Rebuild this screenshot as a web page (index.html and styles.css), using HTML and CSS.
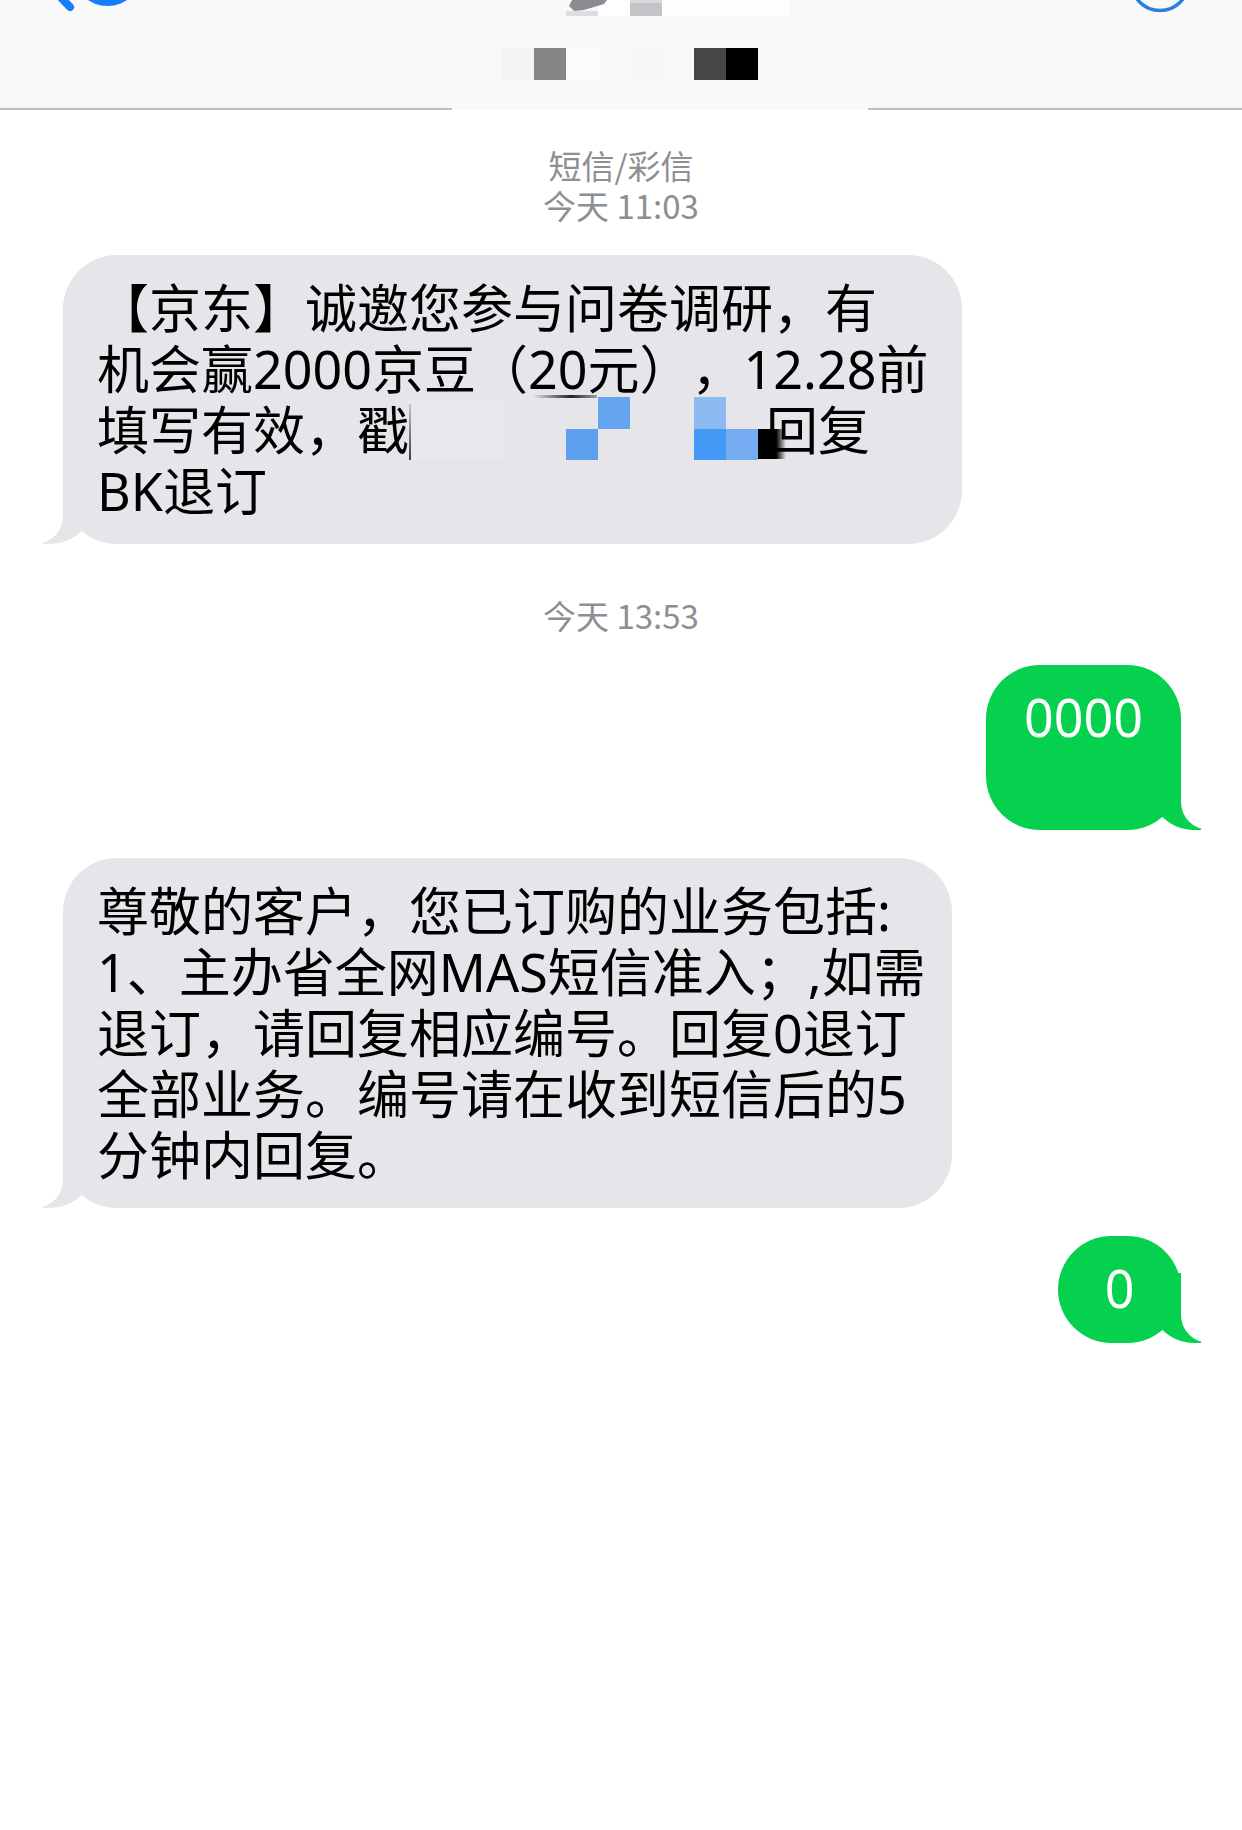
FILE: index.html
```html
<!DOCTYPE html>
<html lang="zh-CN">
<head>
<meta charset="utf-8">
<title>信息</title>
<link rel="stylesheet" href="styles.css">
</head>
<body>
<header class="nav">
  <svg class="nav-art" width="1242" height="108" viewBox="0 0 1242 108" aria-hidden="true">
    <path d="M44 -20 L70 7" stroke="#147efb" stroke-width="8" stroke-linecap="round" fill="none"/>
    <ellipse cx="107.5" cy="-28" rx="34.5" ry="34" fill="#147efb"/>
    <circle cx="1160" cy="-18" r="28.5" fill="none" stroke="#2a7fdb" stroke-width="3.5"/>
    <rect x="662" y="0" width="128" height="16" fill="#fdfdfd"/>
    <rect x="598" y="0" width="32" height="16" fill="#ffffff"/>
    <rect x="566" y="11" width="32" height="5" fill="#dedee1"/>
    <polygon points="572,0 607,0 604,4 584,10 574,11 569,6" fill="#8b8c93"/>
    <rect x="630" y="0" width="32" height="16" fill="#c5c5c9"/>
    <rect x="630" y="0" width="32" height="3" fill="#d9d9dc"/>
    <rect x="502" y="48" width="32" height="32" fill="#f3f3f3"/>
    <rect x="534" y="48" width="32" height="32" fill="#858585"/>
    <rect x="566" y="48" width="34" height="32" fill="#fcfcfc"/>
    <rect x="632" y="48" width="31" height="32" fill="#f6f6f6"/>
    <rect x="694" y="48" width="32" height="32" fill="#464646"/>
    <rect x="726" y="48" width="32" height="32" fill="#000000"/>
  </svg>
</header>
<div class="nav-rule"></div>

<main class="thread">
  <div class="stamp">
    <div>短信/彩信</div>
    <div>今天 11:03</div>
  </div>

  <div class="row in">
    <div class="bubble gray w-first">【京东】诚邀您参与问卷调研，有<br>机会赢2000京豆（20元），12.28前<br>填写有效，戳<span class="redact"><span class="px haze"></span><span class="px edge"></span><span class="px smear"></span><span class="px a"></span><span class="px b"></span><span class="px c"></span><span class="px d"></span><span class="px e"></span><span class="px f"></span></span>回复<br>BK退订</div>
  </div>

  <div class="stamp stamp-gap">
    <div>今天 13:53</div>
  </div>

  <div class="row out">
    <div class="bubble green tall">0000</div>
  </div>

  <div class="row in">
    <div class="bubble gray w-second">尊敬的客户，您已订购的业务包括:<br>1、主办省全网MAS短信准入；,如需<br>退订，请回复相应编号。回复0退订<br>全部业务。编号请在收到短信后的5<br>分钟内回复。</div>
  </div>

  <div class="row out">
    <div class="bubble green">0</div>
  </div>
</main>
</body>
</html>
```

FILE: styles.css
```css
html, body {
  margin: 0;
  padding: 0;
  background: #ffffff;
}

body {
  width: 1242px;
  min-height: 1830px;
  font-family: "Noto Sans", "Noto Sans CJK SC", sans-serif;
  color: #000;
  overflow: hidden;
  text-spacing-trim: space-all;
}

.nav {
  height: 108px;
  background: #f9f9f9;
  position: relative;
  overflow: hidden;
}

.nav-art {
  display: block;
}

.nav-rule {
  height: 2px;
  background: linear-gradient(to right, #bdbdbd 0 452px, #f9f9f9 452px 868px, #bdbdbd 868px);
}

.thread {
  display: flex;
  flex-direction: column;
  padding-top: 35px;
}

.stamp {
  text-align: center;
  color: #8e8e93;
  font-family: "Noto Sans CJK SC", sans-serif;
  font-size: 33px;
  line-height: 40px;
  font-weight: 400;
}

.stamp-gap {
  margin-top: 51px;
}

.row {
  display: flex;
  margin-top: 28px;
}

.stamp + .row {
  margin-top: 30px;
}

.row.in {
  justify-content: flex-start;
  padding-left: 63px;
}

.row.out {
  justify-content: flex-end;
  padding-right: 61px;
}

.bubble {
  position: relative;
  font-size: 52px;
  line-height: 61px;
  border-radius: 54px;
  white-space: nowrap;
  box-sizing: border-box;
}

.bubble::before,
.bubble::after {
  content: "";
  position: absolute;
  bottom: 0;
  height: 70px;
}

.gray {
  background: #e5e5ea;
  color: #000;
  padding: 22px 30px 23px 34px;
}

.w-first {
  width: 899px;
}

.w-second {
  width: 889px;
}

.gray::before {
  left: -20px;
  width: 52px;
  background: #e5e5ea;
  border-bottom-right-radius: 45px;
}

.gray::after {
  left: -73px;
  width: 73px;
  background: #ffffff;
  border-bottom-right-radius: 28px;
}

.green {
  background: #06d14e;
  color: #ffffff;
  min-width: 123px;
  text-align: center;
  padding: 21px 38px 25px;
}

.green.tall {
  min-height: 165px;
}

.green::before {
  right: -20px;
  width: 52px;
  background: #06d14e;
  border-bottom-left-radius: 45px;
}

.green::after {
  right: -73px;
  width: 73px;
  background: #ffffff;
  border-bottom-left-radius: 28px;
}

.redact {
  display: inline-block;
  position: relative;
  width: 357px;
  height: 61px;
  vertical-align: top;
}

.px {
  position: absolute;
  display: block;
}

.haze {
  left: 0; top: 0; width: 96px; height: 61px;
  background: rgba(255, 255, 255, 0.12);
}

.edge {
  left: 0; top: 5px; width: 2px; height: 56px;
  background: linear-gradient(to bottom, rgba(60,60,60,0.2), rgba(40,40,40,0.9));
}

.smear {
  left: 124px; top: -4px; width: 64px; height: 3px;
  background: linear-gradient(to right, rgba(0,0,0,0), rgba(0,0,0,0.85) 60%, rgba(0,0,0,0.3));
}

.a { left: 189px; top: -2px; width: 32px; height: 32px; background: #65a5f0; }
.b { left: 157px; top: 30px; width: 32px; height: 31px; background: #5fa0ee; }
.c { left: 285px; top: -2px; width: 32px; height: 32px; background: #8db9f3; }
.d { left: 285px; top: 30px; width: 32px; height: 31px; background: #4399f5; }
.e { left: 317px; top: 30px; width: 32px; height: 31px; background: #74abf1; }
.f {
  left: 349px; top: 30px; width: 28px; height: 30px;
  background: linear-gradient(to right, #000 65%, rgba(0,0,0,0));
}
```
